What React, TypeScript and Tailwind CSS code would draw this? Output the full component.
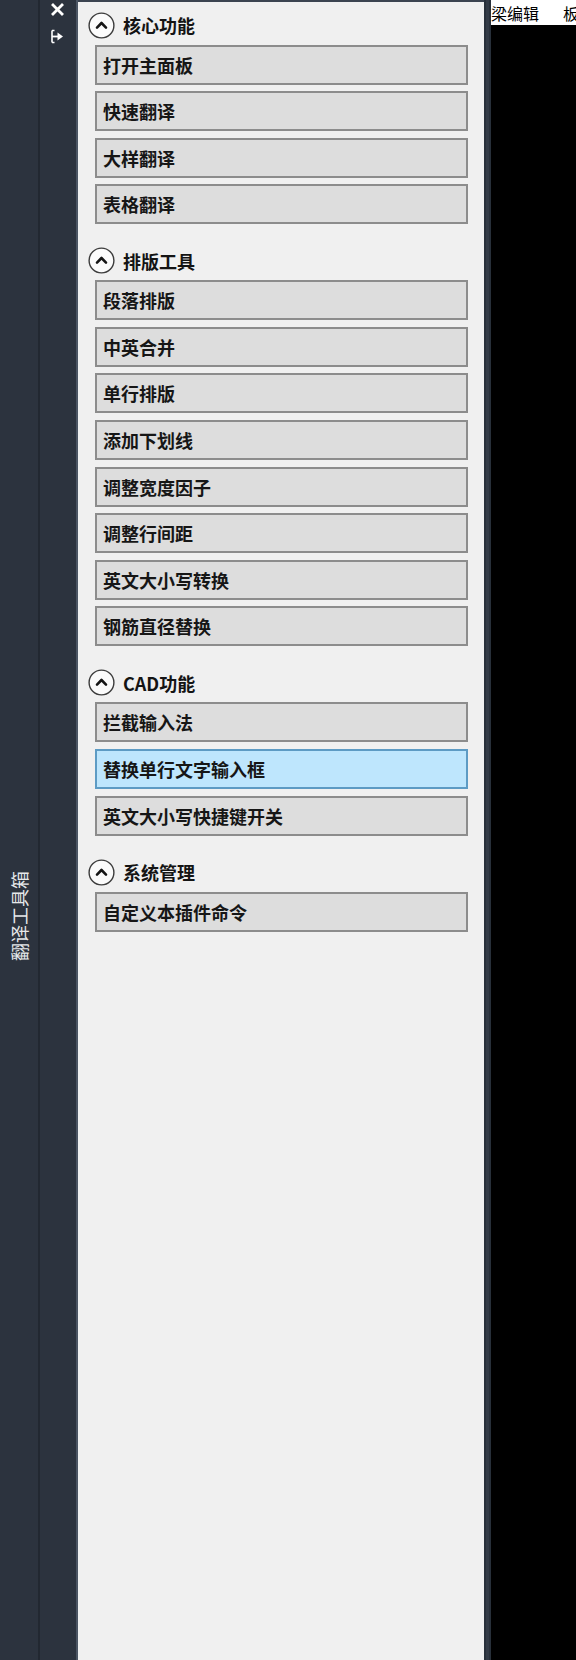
import React from "react";

const sections = [
  { title: "核心功能", items: ["打开主面板", "快速翻译", "大样翻译", "表格翻译"] },
  {
    title: "排版工具",
    items: ["段落排版", "中英合并", "单行排版", "添加下划线", "调整宽度因子", "调整行间距", "英文大小写转换", "钢筋直径替换"],
  },
  { title: "CAD功能", items: ["拦截输入法", "替换单行文字输入框", "英文大小写快捷键开关"] },
  { title: "系统管理", items: ["自定义本插件命令"] },
];

const hovered = "替换单行文字输入框";

function CollapseIcon() {
  return (
    <svg width="27" height="27" viewBox="0 0 27 27" className="shrink-0">
      <circle cx="13.5" cy="13.5" r="12.4" fill="#fbfbfb" stroke="#3c3c3c" strokeWidth="1.4" />
      <path d="M9 15.6 L13.5 11 L18 15.6" fill="none" stroke="#151515" strokeWidth="2.6" strokeLinecap="round" strokeLinejoin="round" />
    </svg>
  );
}

function DockIcon() {
  return (
    <svg width="14" height="15" viewBox="0 0 14 15">
      <path d="M2 1.5 V13.5 M2 1.5 H4.5 M2 13.5 H4.5" stroke="#ffffff" strokeWidth="1.6" fill="none" />
      <path d="M2 7.5 H8.5" stroke="#ffffff" strokeWidth="1.8" />
      <path d="M7.5 3.5 L13 7.5 L7.5 11.5 Z" fill="#ffffff" />
    </svg>
  );
}

function Section({ title, items }: { title: string; items: string[] }) {
  return (
    <div className="flex flex-col">
      <div className="flex items-center gap-[8px] pl-[10px] h-[26px]">
        <CollapseIcon />
        <span className="text-[18px] font-bold text-[#141414] leading-none">{title}</span>
      </div>
      <div className="flex flex-col gap-[6.6px] mt-[6.5px] ml-[17px] mr-[16px]">
        {items.map((item) => (
          <div
            key={item}
            className={
              item === hovered
                ? "h-[40px] flex items-center pl-[6px] border-2 border-[#5d9bc4] bg-[#bee6fd]"
                : "h-[40px] flex items-center pl-[6px] border-2 border-[#8c8c8c] bg-[#dddddd]"
            }
          >
            <span className="text-[18px] font-bold text-[#161616] leading-none">{item}</span>
          </div>
        ))}
      </div>
    </div>
  );
}

export default function App() {
  return (
    <div
      className="flex w-[576px] h-[1660px] overflow-hidden bg-black"
      style={{ fontFamily: '"Noto Sans CJK SC", "Noto Sans", sans-serif' }}
    >
      {/* collapsed tab strip */}
      <div className="w-[38px] shrink-0 bg-[#2c333e] flex flex-col items-center pt-[871px]">
        <span className="[writing-mode:vertical-rl] [text-orientation:sideways] rotate-180 text-[18px] text-[#e6e8ea] leading-none">
          翻译工具箱
        </span>
      </div>
      <div className="w-[2px] shrink-0 bg-[#222831]" />
      {/* title bar */}
      <div className="w-[36px] shrink-0 bg-[#2c333e] flex flex-col items-center pt-[3px] gap-[13px] pr-[2px]">
        <svg width="13" height="13" viewBox="0 0 13 13">
          <path d="M2 2 L11 11 M11 2 L2 11" stroke="#ffffff" strokeWidth="2.8" strokeLinecap="square" />
        </svg>
        <DockIcon />
      </div>
      <div className="w-[2px] shrink-0 bg-[#4b5563]" />
      {/* panel */}
      <div className="w-[406px] shrink-0 bg-[#f0f0f0] border-t-2 border-[#3b4350] pt-[10px] flex flex-col gap-[23.5px]">
        {sections.map((s) => (
          <Section key={s.title} title={s.title} items={s.items} />
        ))}
      </div>
      <div className="w-[7px] shrink-0 bg-[#333b46] border-x-2 border-[#28303a]" />
      {/* drawing area */}
      <div className="flex-1 flex flex-col">
        <div className="h-[25px] bg-white flex items-center overflow-hidden whitespace-nowrap">
          <span className="text-[16px] text-black leading-none">梁编辑</span>
          <span className="text-[16px] text-black leading-none ml-[24px]">板</span>
        </div>
        <div className="flex-1 bg-black" />
      </div>
    </div>
  );
}
